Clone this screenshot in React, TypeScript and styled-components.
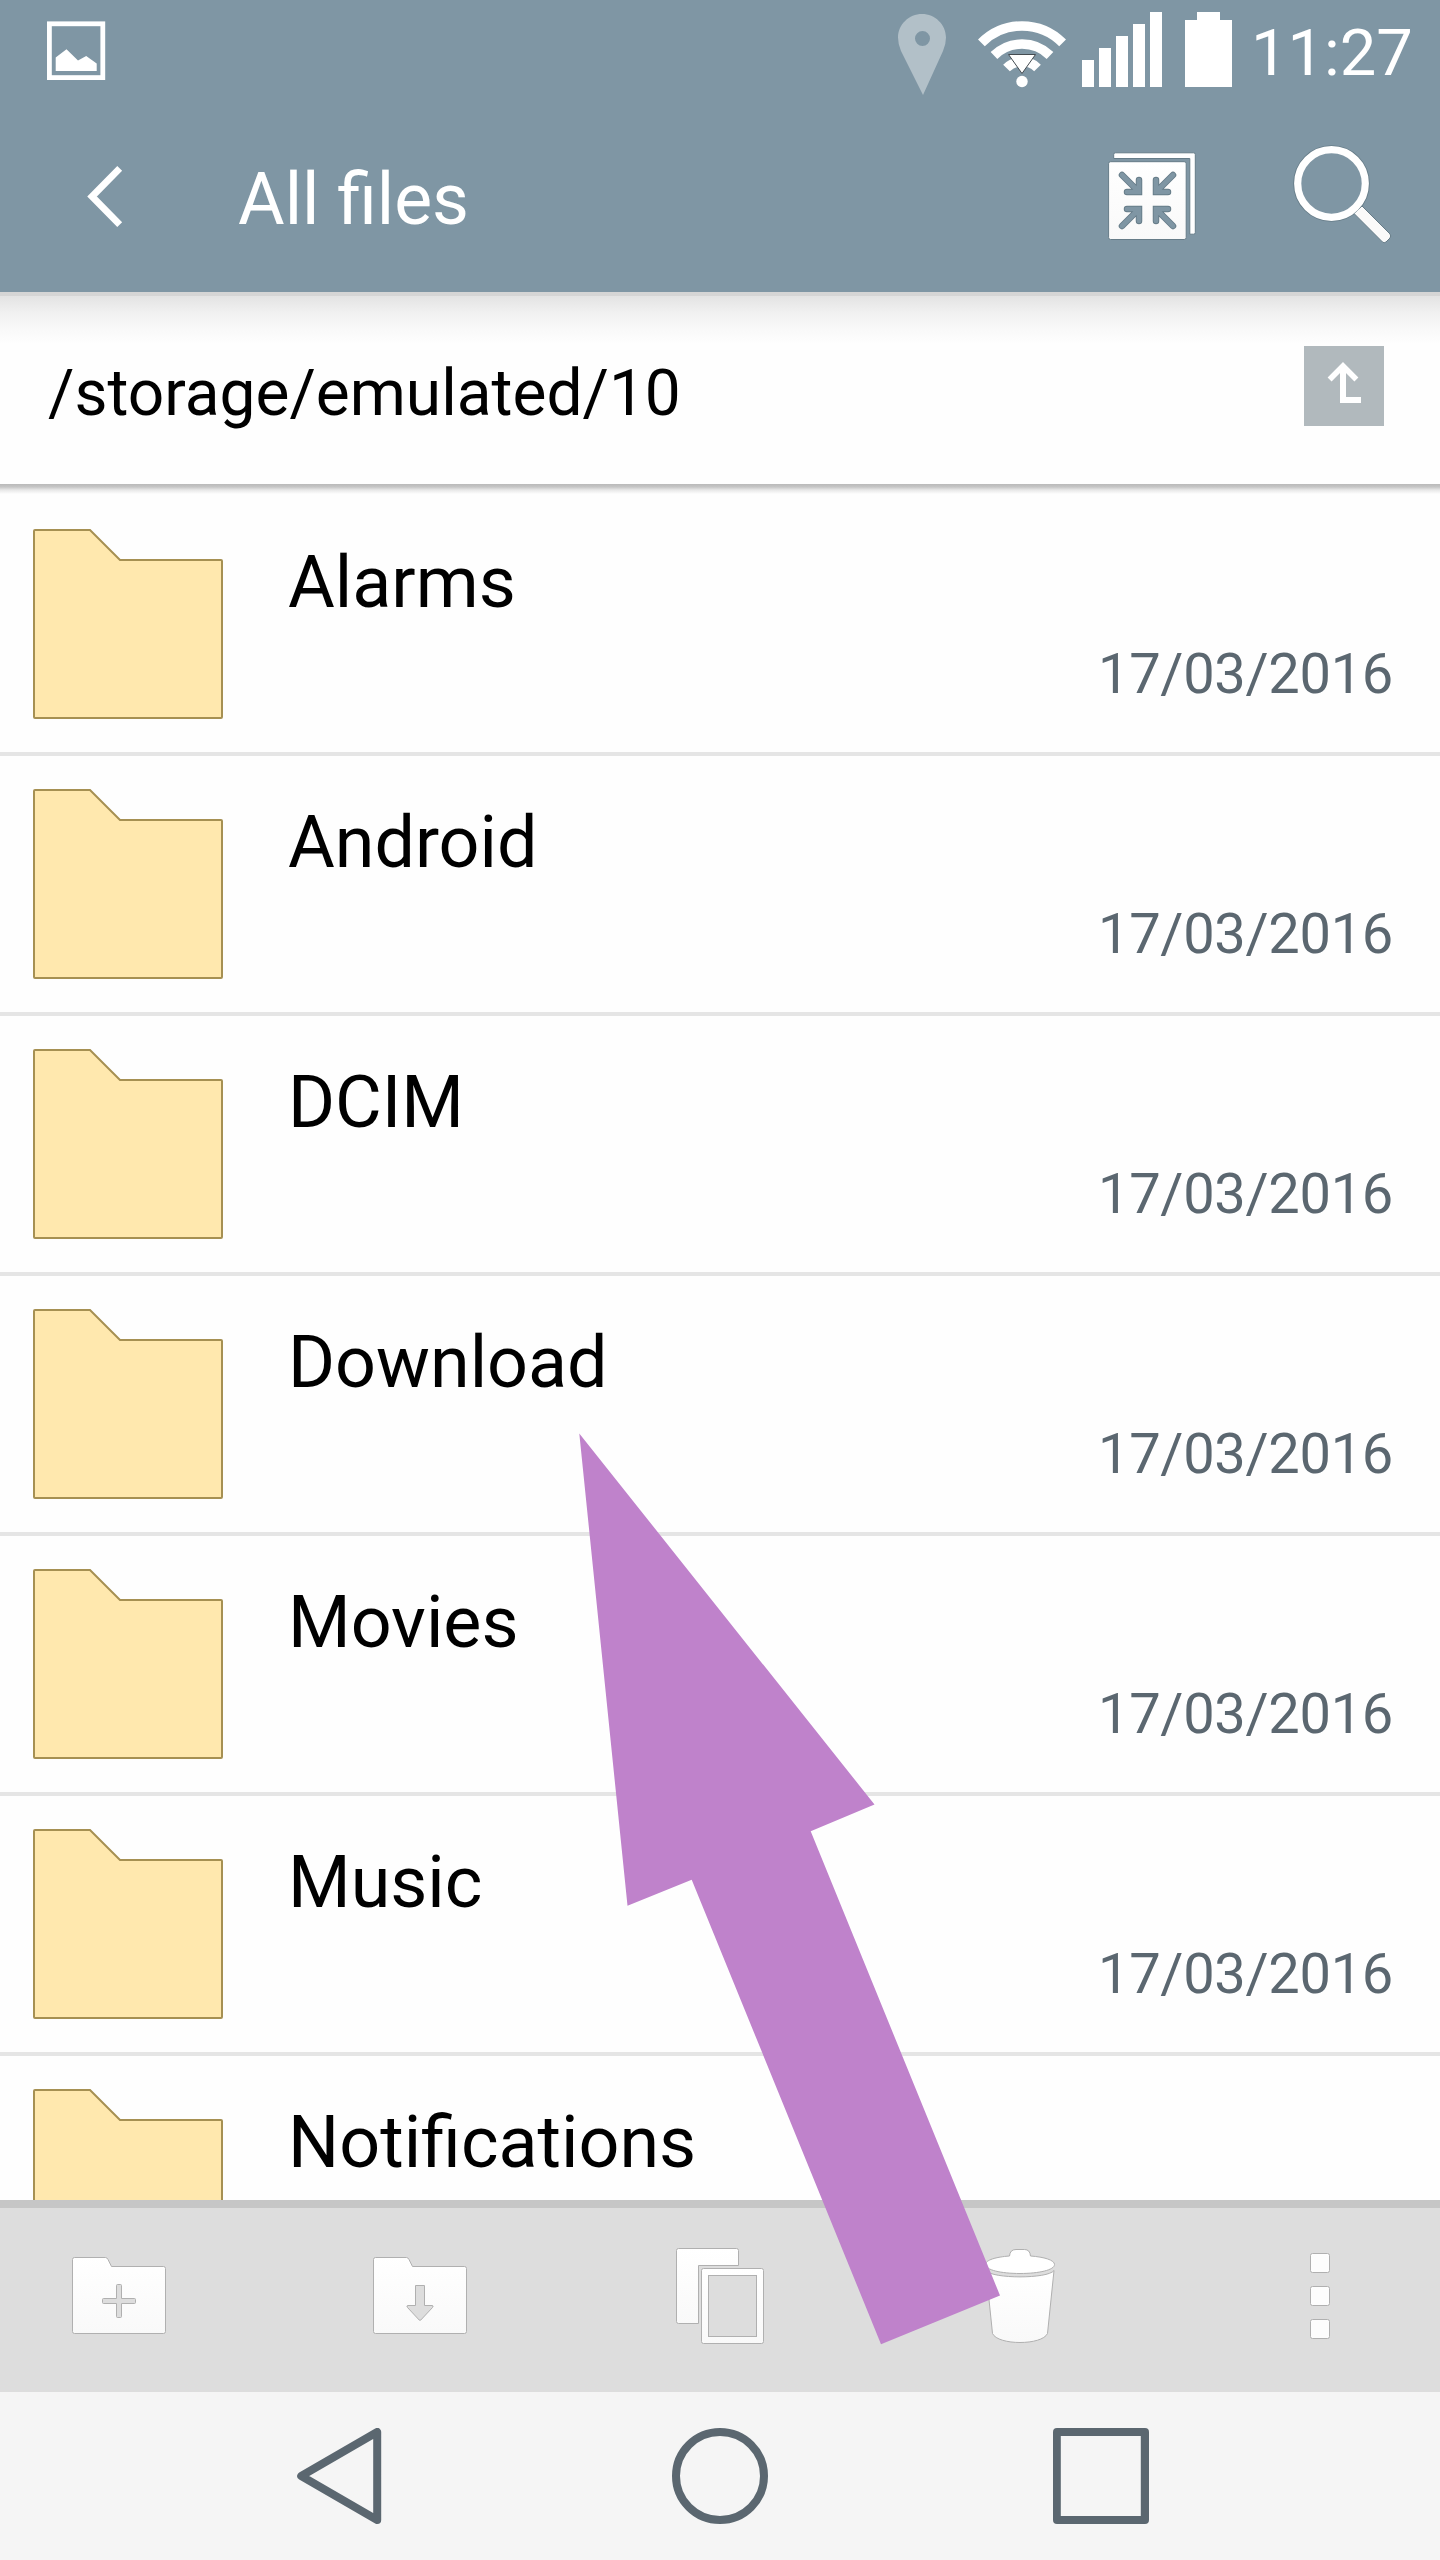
import React from "react";
import styled, { createGlobalStyle } from "styled-components";

const GlobalStyle = createGlobalStyle`
  *, *::before, *::after { box-sizing: border-box; }
  html, body { margin: 0; padding: 0; background: #fefefe; }
  body { font-family: Roboto, "Noto Sans", sans-serif; }
`;

const slate = "#7f96a4";
const slateLine = "#667c88";
const ink = "#5b6770";

const Screen = styled.main`
  position: relative;
  display: flex;
  flex-direction: column;
  width: 1440px;
  height: 2560px;
  overflow: hidden;
  background: #fefefe;
`;

const Header = styled.header`
  flex: none;
  height: 292px;
  background: ${slate};
  color: #fff;
`;

const StatusBar = styled.div`
  display: flex;
  height: 106px;
  padding: 0 28px 0 46px;
`;

const Tray = styled.div`
  display: flex;
  margin-left: auto;
`;

const Glyph = styled.svg<{ $gap?: number }>`
  display: block;
  flex: none;
  margin-left: ${(p) => p.$gap ?? 0}px;
`;

const Clock = styled.time`
  width: 161px;
  margin-left: 19px;
  padding-top: 14px;
  font-size: 65px;
  line-height: 78px;
  white-space: nowrap;
`;

const ActionBar = styled.div`
  display: flex;
  align-items: center;
  height: 186px;
  padding: 0 45px 0 84px;
`;

const Title = styled.h1`
  flex: 1;
  margin: 2px 0 0 112px;
  font-size: 71.500px;
  font-weight: 400;
  line-height: 84px;
`;

const IconButton = styled.button<{ $gap?: number }>`
  display: flex;
  margin: 0 0 0 ${(p) => p.$gap ?? 0}px;
  padding: 0;
  border: 0;
  background: none;
`;

const PathBar = styled.div`
  display: flex;
  flex: none;
  align-items: flex-start;
  justify-content: space-between;
  height: 192px;
  padding: 54px 56px 0 48px;
  background: linear-gradient(#d5d5d5 0 4px, #e3e3e3 4px, #f0f0f0 20px, #f9f9f9 38px, #fefefe 52px);
`;

const PathText = styled.span`
  padding-top: 10px;
  font-size: 64px;
  line-height: 76px;
  color: #000;
`;

const UpButton = styled.button`
  display: flex;
  width: 80px;
  height: 80px;
  padding: 0;
  border: 0;
  background: #b1b9bd;
`;

const FileList = styled.ul`
  flex: 1;
  min-height: 0;
  margin: 0;
  padding: 12px 0 0;
  overflow: hidden;
  list-style: none;
  background: linear-gradient(#b9b9b9, #c6c6c6 3px, #e8e8e8 6px, #fefefe 10px);
`;

const Row = styled.li`
  display: flex;
  height: 260px;
  padding: 33px 47px 0 33px;
  border-bottom: 4px solid #e5e5e5;
`;

const Details = styled.div`
  display: flex;
  flex: 1;
  flex-direction: column;
  margin: 12px 0 0 65px;
`;

const Name = styled.span`
  font-size: 71.800px;
  line-height: 84px;
  color: #000;
`;

const Modified = styled.span`
  align-self: flex-end;
  margin-top: 16px;
  font-size: 56px;
  line-height: 66px;
  letter-spacing: -0.300px;
  color: ${ink};
`;

const Toolbar = styled.div`
  display: flex;
  flex: none;
  gap: 60px;
  height: 192px;
  border-top: 8px solid #c6c6c6;
  background: #ddd;
`;

const Tool = styled.button`
  display: flex;
  flex: 1;
  align-items: center;
  justify-content: center;
  padding: 0;
  border: 0;
  background: none;
`;

const NavBar = styled.nav`
  display: flex;
  flex: none;
  align-items: center;
  height: 168px;
  padding: 0 0 0 297px;
  background: #f5f5f5;
`;

const Pointer = styled.svg`
  position: absolute;
  left: 579px;
  top: 1433px;
`;

const FolderIcon = () => (
  <Glyph width="190" height="190" viewBox="33 529 190 190">
    <path d="M34 531Q34 530 35 530H90L120 560H221Q222 560 222 561V717Q222 718 221 718H35Q34 718 34 717Z" fill="#ffe8ae" stroke="#a69052" strokeWidth="2" />
  </Glyph>
);

const arrowIn = "M1127 192H1139V180M1122 175L1138.500 191.500";
const quadrants = ["", "translate(2295 0) scale(-1 1)", "translate(0 401) scale(1 -1)", "translate(2295 401) scale(-1 -1)"];

const CollapseIcon = () => (
  <Glyph width="90" height="96" viewBox="1107 151 90 96">
    <path d="M1115.500 152.800H1193.500Q1195.300 152.800 1195.300 154.600V232.500Q1195.300 234.200 1193.500 234.200H1189.800V158.500H1113.700V154.600Q1113.700 152.800 1115.500 152.800Z" fill="#fff" stroke={slateLine} />
    <rect x="1108.600" y="161.700" width="77.600" height="77.800" rx="2" fill="url(#sheen)" stroke={slateLine} />
    {quadrants.map((t) => (
      <g key={t} transform={t} fill="none" strokeLinecap="round">
        <path d={arrowIn} stroke={slateLine} strokeWidth="6.500" />
        <path d={arrowIn} stroke={slate} strokeWidth="4.700" />
      </g>
    ))}
  </Glyph>
);

const SearchIcon = () => (
  <Glyph width="102" height="110" viewBox="1293 144 102 110">
    <g fill="none" stroke={slateLine}>
      <circle cx="1331.500" cy="183.500" r="33.800" strokeWidth="9" />
    </g>
    <path d="M1362 206L1390 234Q1391.500 236 1390 238L1386 242Q1384 243.500 1382.500 242L1354 213.500Z" fill="#fafafa" stroke={slateLine} />
    <circle cx="1331.500" cy="183.500" r="33.800" fill={slate} stroke="#fff" strokeWidth="7.200" />
  </Glyph>
);

const folderOutline = "M74.500 2257.500H105.500Q107 2257.500 108 2259.500L111.500 2266.500H163.500Q165.500 2266.500 165.500 2268.500V2331.500Q165.500 2333.500 163.500 2333.500H74.500Q72.500 2333.500 72.500 2331.500V2259.500Q72.500 2257.500 74.500 2257.500Z";
const edge = "#b0b0b0";

const NewFolderIcon = () => (
  <Glyph width="96" height="96" viewBox="72 2252 96 96">
    <path d={folderOutline} fill="url(#sheen)" stroke={edge} />
    <path d="M117.500 2284.500H120.500Q121.500 2284.500 121.500 2285.500V2298.500H134.500Q135.500 2298.500 135.500 2299.500V2302.500Q135.500 2303.500 134.500 2303.500H121.500V2316.500Q121.500 2317.500 120.500 2317.500H117.500Q116.500 2317.500 116.500 2316.500V2303.500H103.500Q102.500 2303.500 102.500 2302.500V2299.500Q102.500 2298.500 103.500 2298.500H116.500V2285.500Q116.500 2284.500 117.500 2284.500Z" fill="#ddd" stroke={edge} />
  </Glyph>
);

const MoveIcon = () => (
  <Glyph width="96" height="96" viewBox="71 2252 96 96">
    <path d={folderOutline} fill="url(#sheen)" stroke={edge} />
    <path d="M114.500 2285.500H123.500V2305.500H131Q133 2305.500 131.500 2307.500L119.800 2320Q119 2321 118.200 2320L106.500 2307.500Q105 2305.500 107 2305.500H114.500Z" fill="#ddd" stroke={edge} />
  </Glyph>
);

const CopyIcon = () => (
  <Glyph width="96" height="104" viewBox="672 2248 96 104">
    <path d="M678.500 2248.500H736.500Q738.500 2248.500 738.500 2250.500V2265.500H698.500V2323.500H678.500Q676.500 2323.500 676.500 2321.500V2250.500Q676.500 2248.500 678.500 2248.500Z" fill="url(#sheen)" stroke={edge} />
    <rect x="701.500" y="2268.500" width="62" height="75" rx="2" fill="url(#sheen)" stroke={edge} />
    <rect x="708.500" y="2275.500" width="48" height="61" fill="#ddd" stroke={edge} />
  </Glyph>
);

const TrashIcon = () => (
  <Glyph width="96" height="104" viewBox="972 2248 96 104">
    <path d="M986 2270.500C992 2279 1048 2279 1054 2270.500L1047.500 2333.500C1042 2345.500 998 2345.500 992.500 2333.500Z" fill="url(#sheen)" stroke={edge} />
    <path d="M1009.500 2256Q1010 2249.500 1016 2249.500H1024.500Q1030 2249.500 1030.500 2256C1044 2257 1054.500 2260 1054.500 2264.500C1054.500 2270 1039 2273.500 1020 2273.500S985.500 2270 985.500 2264.500C985.500 2260 996 2257 1009.500 2256Z" fill="#fff" stroke={edge} />
  </Glyph>
);

const MoreIcon = () => (
  <Glyph width="96" height="96" viewBox="1272 2248 96 96">
    {[2249.5, 2282.5, 2315.5].map((y) => (
      <rect key={y} x="1310.500" y={y} width="19" height="19" rx="2" fill="#fdfdfd" stroke={edge} />
    ))}
  </Glyph>
);

const tools = [
  { label: "New folder", Icon: NewFolderIcon },
  { label: "Move", Icon: MoveIcon },
  { label: "Copy", Icon: CopyIcon },
  { label: "Delete", Icon: TrashIcon },
  { label: "More", Icon: MoreIcon },
];

const folders: { name: string; modified?: string }[] = [
  { name: "Alarms", modified: "17/03/2016" },
  { name: "Android", modified: "17/03/2016" },
  { name: "DCIM", modified: "17/03/2016" },
  { name: "Download", modified: "17/03/2016" },
  { name: "Movies", modified: "17/03/2016" },
  { name: "Music", modified: "17/03/2016" },
  { name: "Notifications" },
];

export default function App() {
  return (
    <>
      <GlobalStyle />
      <Screen>
        <Header>
          <StatusBar>
            <Glyph width="61" height="106" viewBox="46 0 61 106">
              <rect x="49.400" y="23.800" width="53.400" height="53.800" fill="none" stroke="#fff" strokeWidth="4.800" />
              <path d="M55.700 57.500L66.500 49.300L78 60.500L86.200 56L96.700 63.500V71H55.700Z" fill="#fff" />
            </Glyph>
            <Tray>
              <Glyph width="52" height="106" viewBox="896 0 52 106">
                <path fillRule="evenodd" d="M922 14C935 14 946 24.500 946 37.500Q946 44 943 51L923 95L901 51Q898 44 898 37.500C898 24.500 909 14 922 14ZM922.500 31A7.500 7.500 0 1 0 922.500 46A7.500 7.500 0 1 0 922.500 31Z" fill="#b2c0c8" />
              </Glyph>
              <Glyph $gap={28} width="92" height="106" viewBox="976 0 92 106">
                <g fill="none" stroke="#fff" strokeWidth="9.500">
                  <path d="M981.400 42.900A57 57 0 0 1 1062.600 42.900" />
                  <path d="M994 55.500A40 40 0 0 1 1050 55.500" />
                  <path d="M1006.500 68A22 22 0 0 1 1037.500 68" />
                </g>
                <path d="M1008.500 54.500H1035.500L1022 73.500Z" fill="#fff" stroke="#444b50" />
                <circle cx="1022" cy="81.500" r="5.700" fill="#fff" />
              </Glyph>
              <Glyph $gap={14} width="80" height="106" viewBox="1082 0 80 106">
                <path d="M1082 60H1094V87H1082ZM1099 48H1111V87H1099ZM1116 36H1128V87H1116ZM1133 24H1145V87H1133ZM1150 12H1162V87H1150Z" fill="#fff" />
              </Glyph>
              <Glyph $gap={23} width="47" height="106" viewBox="1185 0 47 106">
                <path d="M1185 20H1197V12H1220V20H1232V87H1185Z" fill="#fff" />
              </Glyph>
              <Clock>11:27</Clock>
            </Tray>
          </StatusBar>
          <ActionBar>
            <IconButton aria-label="Back">
              <Glyph width="42" height="70" viewBox="84 164 42 70">
                <path d="M119.700 168.300L92 196.500L119.700 224.700" fill="none" stroke="#fff" strokeWidth="6.800" />
              </Glyph>
            </IconButton>
            <Title>All files</Title>
            <IconButton aria-label="Collapse">
              <CollapseIcon />
            </IconButton>
            <IconButton aria-label="Search" $gap={96}>
              <SearchIcon />
            </IconButton>
          </ActionBar>
        </Header>
        <PathBar>
          <PathText>/storage/emulated/10</PathText>
          <UpButton aria-label="Up one level">
            <Glyph width="80" height="80" viewBox="1304 346 80 80">
              <path d="M1329.600 379.500L1343 366L1356.400 379.500" fill="none" stroke="#fff" strokeWidth="5.600" />
              <path d="M1343 366V400H1361" fill="none" stroke="#fff" strokeWidth="6" />
            </Glyph>
          </UpButton>
        </PathBar>
        <FileList>
          {folders.map(({ name, modified }) => (
            <Row key={name}>
              <FolderIcon />
              <Details>
                <Name>{name}</Name>
                {modified && <Modified>{modified}</Modified>}
              </Details>
            </Row>
          ))}
        </FileList>
        <Toolbar>
          {tools.map(({ label, Icon }) => (
            <Tool key={label} aria-label={label}>
              <Icon />
            </Tool>
          ))}
        </Toolbar>
        <NavBar>
          <Glyph width="85" height="96" viewBox="297 2428 85 96">
            <path d="M377.200 2432V2520L301.200 2476Z" fill="none" stroke={ink} strokeWidth="8" strokeLinejoin="round" />
          </Glyph>
          <Glyph $gap={290} width="96" height="96" viewBox="672 2428 96 96">
            <circle cx="720" cy="2476" r="44" fill="none" stroke={ink} strokeWidth="8" />
          </Glyph>
          <Glyph $gap={285} width="96" height="96" viewBox="1053 2428 96 96">
            <path fillRule="evenodd" d="M1057 2428H1145Q1149 2428 1149 2432V2520Q1149 2524 1145 2524H1057Q1053 2524 1053 2520V2432Q1053 2428 1057 2428ZM1060.800 2436V2516H1140.800V2436Z" fill={ink} />
          </Glyph>
        </NavBar>
        <Pointer width="422" height="912" viewBox="579 1433 422 912">
          <defs>
            <linearGradient id="sheen" x1="0" y1="0" x2="0" y2="1">
              <stop offset="0" stopColor="#ffffff" />
              <stop offset="1" stopColor="#f9f9f9" />
            </linearGradient>
          </defs>
          <path d="M579.300 1433.500L874.500 1804.500L810.700 1831.300L1000 2295.500L881 2344.200L691.700 1879.700L627.500 1905.700Z" fill="#bf82cb" />
        </Pointer>
      </Screen>
    </>
  );
}
